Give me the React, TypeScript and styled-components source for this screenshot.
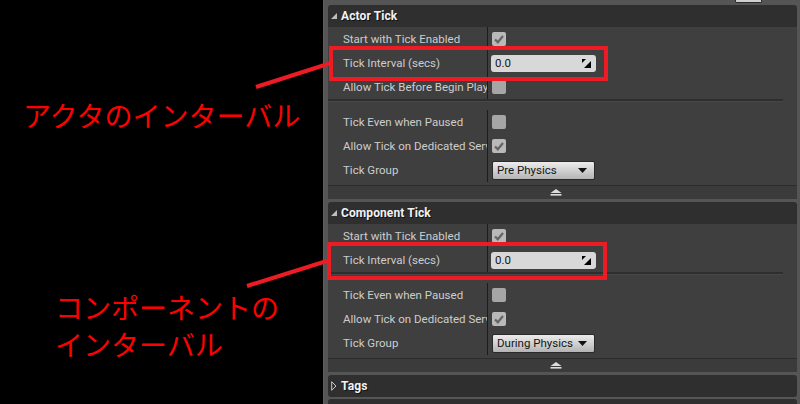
import React from "react";
import styled, { createGlobalStyle } from "styled-components";

const GlobalStyle = createGlobalStyle`
  html, body {
    margin: 0;
    padding: 0;
    background: #000;
  }
  body {
    font-family: Roboto, "Liberation Sans", sans-serif;
  }
`;

const Page = styled.div`
  position: relative;
  width: 800px;
  height: 404px;
  display: flex;
  background: #000;
  overflow: hidden;
`;

const Notes = styled.div`
  width: 323px;
  flex-shrink: 0;
  display: flex;
  flex-direction: column;
  padding-top: 97px;
  box-sizing: border-box;
`;

const Caption = styled.div<{ $indent: number; $top: number }>`
  margin-left: ${(p) => p.$indent}px;
  margin-top: ${(p) => p.$top}px;
  color: #ff0000;
  font-family: "Noto Sans CJK JP", "Noto Sans", sans-serif;
  font-size: 28px;
  line-height: 37px;
  white-space: nowrap;
`;

const Panel = styled.div`
  flex: 1;
  background: #555555;
  padding: 0 3px 0 4px;
  display: flex;
  flex-direction: column;
  border-left: 1px solid #5e5e5e;
  overflow: hidden;

  & > * {
    flex-shrink: 0;
  }
`;

const TopStrip = styled.div`
  height: 5px;
  display: flex;
  justify-content: flex-end;
  padding-right: 35px;
`;

const CutButton = styled.div`
  width: 25px;
  height: 2px;
  background: #cfcfcf;
  border: 1px solid #2a2a2a;
  border-top: none;
  border-radius: 0 0 2px 2px;
`;

const Section = styled.section<{ $gap?: number }>`
  margin-bottom: ${(p) => p.$gap ?? 3}px;
  display: flex;
  flex-direction: column;
`;

const Header = styled.div<{ $open?: boolean }>`
  height: 22px;
  flex-shrink: 0;
  background: #2f2f2f;
  border-radius: ${(p) => (p.$open ? "3px 3px 0 0" : "3px")};
  display: flex;
  align-items: center;
  gap: 4px;
  padding-left: 3px;
  box-sizing: border-box;
`;

const HeaderTitle = styled.span`
  color: #f2f2f2;
  font-weight: 700;
  font-size: 12px;
  text-shadow: 1px 1px 0 #111;
  letter-spacing: 0.1px;
`;

const Body = styled.div`
  background: #3f3f3f;
  padding-bottom: 3px;
`;

const Row = styled.div`
  height: 24px;
  display: grid;
  grid-template-columns: 159px 1fr;
`;

const Label = styled.div`
  padding-left: 15px;
  display: flex;
  align-items: center;
  overflow: hidden;
  white-space: nowrap;
  color: #cdcdcd;
  font-size: 11.5px;
`;

const Value = styled.div`
  border-left: 1px solid #1c1c1c;
  padding-left: 4px;
  display: flex;
  align-items: center;
`;

const Separator = styled.div`
  height: 11px;
  margin-right: 14px;
  box-sizing: border-box;
  border-top: 2px solid #2e2e2e;
  background: linear-gradient(#474747 0 1px, transparent 1px);
`;

const Check = styled.div<{ $on?: boolean }>`
  width: 14px;
  height: 14px;
  border-radius: 2px;
  background: ${(p) => (p.$on ? "#b9b9b9" : "#a6a6a6")};
  display: flex;
  align-items: center;
  justify-content: center;
`;

const NumberBox = styled.div`
  width: 105px;
  height: 17px;
  margin-left: -1px;
  border-radius: 3px;
  background: #d8d8d8;
  display: flex;
  align-items: center;
  justify-content: space-between;
  padding: 0 5px 0 4px;
  box-sizing: border-box;
  color: #151515;
  font-size: 11.5px;
`;

const Combo = styled.div<{ $w: number }>`
  width: ${(p) => p.$w}px;
  height: 19px;
  box-sizing: border-box;
  border: 1px solid #2a2a2a;
  border-radius: 2px;
  background: linear-gradient(#ececec, #b4b4b4);
  display: flex;
  align-items: center;
  justify-content: space-between;
  padding: 0 7px 0 4px;
  color: #141414;
  font-size: 11.5px;
`;

const Bar = styled.div`
  height: 14px;
  background: #3b3b3b;
  border-top: 1px solid #2c2c2c;
  box-sizing: border-box;
  display: flex;
  align-items: center;
  justify-content: center;
  padding-right: 14px;
`;

const Overlay = styled.svg`
  position: absolute;
  left: 0;
  top: 0;
  pointer-events: none;
`;

const OpenArrow = () => (
  <svg width="6" height="6" viewBox="0 0 6 6">
    <polygon points="6,0 6,6 0,6" fill="#bdbdbd" />
  </svg>
);

const ClosedArrow = () => (
  <svg width="6" height="10" viewBox="0 0 6 10">
    <polygon points="0.7,0.7 5,5 0.7,9.3" fill="none" stroke="#c8c8c8" strokeWidth="1" />
  </svg>
);

const Tick = () => (
  <svg width="12" height="12" viewBox="0 0 12 12">
    <path d="M2 6.5 L4.8 9.2 L10 3" fill="none" stroke="#666" strokeWidth="2.3" />
  </svg>
);

const SpinIcon = () => (
  <svg width="9" height="9" viewBox="0 0 9 9">
    <polygon points="0,0 4,0 0,4" fill="#000" />
    <polygon points="9,2 9,9 2,9" fill="#000" />
  </svg>
);

const DownArrow = () => (
  <svg width="9" height="5" viewBox="0 0 9 5">
    <polygon points="0,0 9,0 4.5,5" fill="#111" />
  </svg>
);

const CollapseIcon = () => (
  <svg width="12" height="7" viewBox="0 0 12 7">
    <polygon points="6,0 11.5,4 0.5,4" fill="#dcdcdc" />
    <rect x="0.5" y="5" width="11" height="1.6" fill="#dcdcdc" />
  </svg>
);

type Field =
  | { label: string; kind: "check"; on: boolean }
  | { label: string; kind: "number"; value: string }
  | { label: string; kind: "combo"; value: string; width: number };

const FieldRow: React.FC<{ field: Field }> = ({ field }) => (
  <Row>
    <Label>{field.label}</Label>
    <Value>
      {field.kind === "check" && <Check $on={field.on}>{field.on && <Tick />}</Check>}
      {field.kind === "number" && (
        <NumberBox>
          <span>{field.value}</span>
          <SpinIcon />
        </NumberBox>
      )}
      {field.kind === "combo" && (
        <Combo $w={field.width}>
          <span>{field.value}</span>
          <DownArrow />
        </Combo>
      )}
    </Value>
  </Row>
);

const TickSection: React.FC<{ title: string; basic: Field[]; advanced: Field[] }> = ({
  title,
  basic,
  advanced,
}) => (
  <Section>
    <Header $open>
      <OpenArrow />
      <HeaderTitle>{title}</HeaderTitle>
    </Header>
    <Body>
      {basic.map((f) => (
        <FieldRow key={f.label} field={f} />
      ))}
      <Separator />
      {advanced.map((f) => (
        <FieldRow key={f.label} field={f} />
      ))}
    </Body>
    <Bar>
      <CollapseIcon />
    </Bar>
  </Section>
);

const actorBasic: Field[] = [
  { label: "Start with Tick Enabled", kind: "check", on: true },
  { label: "Tick Interval (secs)", kind: "number", value: "0.0" },
  { label: "Allow Tick Before Begin Play", kind: "check", on: false },
];

const actorAdvanced: Field[] = [
  { label: "Tick Even when Paused", kind: "check", on: false },
  { label: "Allow Tick on Dedicated Server", kind: "check", on: true },
  { label: "Tick Group", kind: "combo", value: "Pre Physics", width: 103 },
];

const compBasic: Field[] = [
  { label: "Start with Tick Enabled", kind: "check", on: true },
  { label: "Tick Interval (secs)", kind: "number", value: "0.0" },
];

const compAdvanced: Field[] = [
  { label: "Tick Even when Paused", kind: "check", on: false },
  { label: "Allow Tick on Dedicated Server", kind: "check", on: true },
  { label: "Tick Group", kind: "combo", value: "During Physics", width: 103 },
];

const RED = "#ed1c24";

const App: React.FC = () => (
  <Page>
    <GlobalStyle />
    <Notes>
      <Caption $indent={23} $top={0}>
        アクタのインターバル
      </Caption>
      <Caption $indent={55} $top={155}>
        コンポーネントの
        <br />
        インターバル
      </Caption>
    </Notes>
    <Panel>
      <TopStrip>
        <CutButton />
      </TopStrip>
      <TickSection title="Actor Tick" basic={actorBasic} advanced={actorAdvanced} />
      <TickSection title="Component Tick" basic={compBasic} advanced={compAdvanced} />
      <Section $gap={2}>
        <Header>
          <ClosedArrow />
          <HeaderTitle>Tags</HeaderTitle>
        </Header>
      </Section>
      <Header $open />
    </Panel>
    <Overlay width="800" height="404" viewBox="0 0 800 404">
      <line x1="256" y1="87" x2="331" y2="63" stroke={RED} strokeWidth="4" />
      <rect x="331" y="48" width="275" height="31" fill="none" stroke={RED} strokeWidth="4" />
      <line x1="247" y1="286" x2="330" y2="260" stroke={RED} strokeWidth="4" />
      <rect x="329" y="244" width="276" height="34" fill="none" stroke={RED} strokeWidth="4" />
    </Overlay>
  </Page>
);

export default App;
